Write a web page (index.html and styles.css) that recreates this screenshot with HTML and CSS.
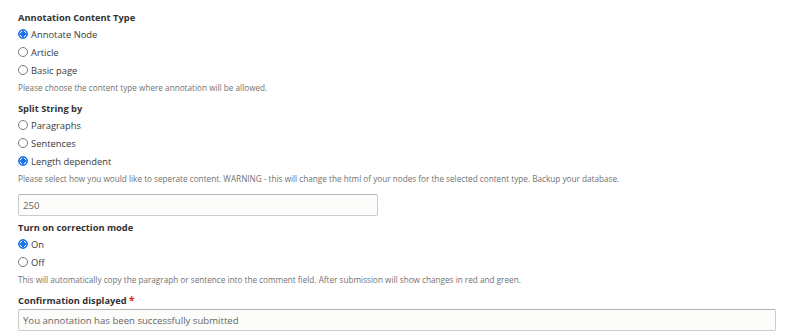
FILE: index.html
```html
<!DOCTYPE html>
<html>
<head>
<meta charset="utf-8">
<link rel="stylesheet" href="styles.css">
</head>
<body>
<form class="form">
  <div class="form-item">
    <div class="label">Annotation Content Type</div>
    <label class="radio"><input type="radio" name="ct" checked><span>Annotate Node</span></label>
    <label class="radio"><input type="radio" name="ct"><span>Article</span></label>
    <label class="radio"><input type="radio" name="ct"><span>Basic page</span></label>
    <div class="desc">Please choose the content type where annotation will be allowed.</div>
  </div>
  <div class="form-item">
    <div class="label">Split String by</div>
    <label class="radio"><input type="radio" name="ss"><span>Paragraphs</span></label>
    <label class="radio"><input type="radio" name="ss"><span>Sentences</span></label>
    <label class="radio"><input type="radio" name="ss" checked><span>Length dependent</span></label>
    <div class="desc">Please select how you would like to seperate content. WARNING - this will change the html of your nodes for the selected content type. Backup your database.</div>
    <input class="text short" type="text" value="250">
  </div>
  <div class="form-item">
    <div class="label">Turn on correction mode</div>
    <label class="radio"><input type="radio" name="cm" checked><span>On</span></label>
    <label class="radio"><input type="radio" name="cm"><span>Off</span></label>
    <div class="desc">This will automatically copy the paragraph or sentence into the comment field. After submission will show changes in red and green.</div>
  </div>
  <div class="form-item">
    <div class="label label-tight">Confirmation displayed <span class="req">*</span></div>
    <input class="text long" type="text" value="You annotation has been successfully submitted">
  </div>
</form>
</body>
</html>
```
FILE: styles.css
```css
html, body {
  margin: 0;
  padding: 0;
  background: #ffffff;
}
body {
  font-family: "Open Sans", "Noto Sans", sans-serif;
  color: #333333;
}
.form {
  padding: 10px 0 0 18px;
}
.form-item {
  display: flex;
  flex-direction: column;
  align-items: flex-start;
  margin-bottom: 4px;
}
.label {
  font-size: 9.3px;
  font-weight: 700;
  line-height: 15px;
  height: 15px;
  color: #333;
}
.label-tight {
  margin-bottom: 1px;
}
.req {
  color: #e62600;
  font-size: 10px;
}
.radio {
  display: flex;
  align-items: center;
  height: 18px;
  font-size: 9.4px;
  color: #3b3b3b;
}
.radio input {
  appearance: none;
  -webkit-appearance: none;
  margin: 0 3px 0 0;
  width: 10px;
  height: 10px;
  border: 1px solid #7a7a7a;
  border-radius: 50%;
  background: #fff;
  box-sizing: border-box;
}
.radio input:checked {
  border-color: #1a73e8;
  background: radial-gradient(circle, #1a73e8 0 2.6px, #ffffff 2.9px 3.3px, #1a73e8 3.6px);
}
.desc {
  font-size: 8.2px;
  line-height: 18px;
  color: #727272;
}
.text {
  font-family: "Open Sans", "Noto Sans", sans-serif;
  font-size: 9.6px;
  color: #666666;
  height: 22px;
  box-sizing: border-box;
  border: 1px solid #cccccc;
  border-top-color: #b4b4b4;
  border-radius: 2px;
  background: #fcfcfa;
  padding: 0 4px;
  margin: 0;
  outline: none;
}
.short {
  width: 360px;
  margin-top: 6px;
}
.long {
  width: 758px;
}
```
